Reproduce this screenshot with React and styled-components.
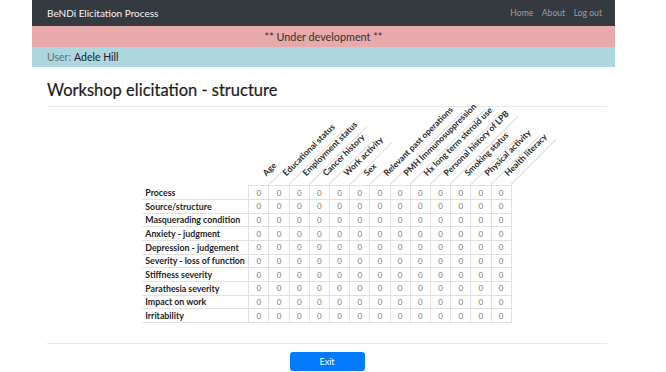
import React from 'react';
import styled, { createGlobalStyle } from 'styled-components';

const GlobalStyle = createGlobalStyle`
  body {
    margin: 0;
    background: #fff;
    font-family: Lato, "Open Sans", sans-serif;
    color: #212529;
  }
`;

const columns = [
  'Age',
  'Educational status',
  'Employment status',
  'Cancer history',
  'Work activity',
  'Sex',
  'Relevant past operations',
  'PMH Immunosuppression',
  'Hx long term steroid use',
  'Personal history of LPB',
  'Smoking status',
  'Physical activity',
  'Health literacy'
];

const rows = [
  'Process',
  'Source/structure',
  'Masquerading condition',
  'Anxiety - judgment',
  'Depression - judgement',
  'Severity - loss of function',
  'Stiffness severity',
  'Parathesia severity',
  'Impact on work',
  'Irritability'
];

const COL_W = 20.2;

const Page = styled.div`
  width: 583px;
  margin-left: 32px;
`;

const Navbar = styled.nav`
  height: 26px;
  background: #343a40;
  display: flex;
  align-items: center;
  justify-content: space-between;
  padding: 0 13px 0 15px;
`;

const Brand = styled.span`
  font-size: 10px;
  color: #f4f4f4;
`;

const NavLinks = styled.div`
  display: flex;
  gap: 8.5px;
`;

const NavLink = styled.a`
  font-size: 8.6px;
  color: #9c9fa3;
  text-decoration: none;
`;

const DevBanner = styled.div`
  height: 21px;
  background: #e7a9a9;
  display: flex;
  align-items: center;
  justify-content: center;
  font-size: 10.8px;
  color: #333;
`;

const UserBar = styled.div`
  height: 20px;
  background: #add6e0;
  display: flex;
  align-items: center;
  padding: 0 15px;
  font-size: 10.5px;
  font-weight: 400;
  color: #222;
`;

const UserLabel = styled.span`
  color: #6a6a6a;
  margin-right: 3px;
`;

const Content = styled.main`
  padding: 0 8px 0 15px;
`;

const Title = styled.h3`
  margin: 12.5px 0 0;
  font-size: 16.5px;
  line-height: 20.4px;
  font-weight: 400;
  color: #1c1c1c;
  -webkit-text-stroke: 0.2px #1c1c1c;
`;

const Rule = styled.hr`
  margin: ${p => p.$top}px 0 0;
  border: 0;
  border-top: 1px solid #e8e8e8;
`;

const Grid = styled.table`
  margin: 0 auto;
  border-collapse: collapse;
  table-layout: fixed;
  width: ${106.5 + COL_W * columns.length}px;
`;

const HeadCell = styled.th`
  height: 78px;
  padding: 0;
  vertical-align: bottom;
  white-space: nowrap;
  width: ${p => p.$w}px;
`;

const Rotated = styled.div`
  display: flex;
  width: ${COL_W}px;
  transform-origin: bottom left;
  transform: translateX(${COL_W}px) rotate(-45deg);
`;

const HeadText = styled.span`
  flex-shrink: 0;
  display: inline-block;
  padding: 0 5px 5px 4px;
  border-bottom: 1px solid #dcdcdc;
  font-size: 8.5px;
  line-height: 10px;
  font-weight: 700;
  color: #2a2a2a;
`;

const Row = styled.tr`
  height: 13.67px;
`;

const LabelCell = styled.td`
  padding: 0 0 0 3px;
  border-bottom: 1px solid #e2e2e2;
  font-size: 8.8px;
  font-weight: 700;
  color: #1e1e1e;
  white-space: nowrap;
  text-align: left;
`;

const ValueCell = styled.td`
  padding: 0;
  border: 1px solid #e0e0e0;
  font-size: 8px;
  color: #777;
  text-align: center;
`;

const ExitButton = styled.button`
  display: block;
  margin: 8.5px auto 0;
  width: 75px;
  height: 18.6px;
  padding: 0;
  border: 0;
  border-radius: 3px;
  background: #007bff;
  color: #fff;
  font-family: inherit;
  font-size: 9px;
`;

export default function App() {
  return (
    <Page>
      <GlobalStyle />
      <Navbar>
        <Brand>BeNDi Elicitation Process</Brand>
        <NavLinks>
          <NavLink href="#">Home</NavLink>
          <NavLink href="#">About</NavLink>
          <NavLink href="#">Log out</NavLink>
        </NavLinks>
      </Navbar>
      <DevBanner>** Under development **</DevBanner>
      <UserBar>
        <UserLabel>User:</UserLabel> Adele Hill
      </UserBar>
      <Content>
        <Title>Workshop elicitation - structure</Title>
        <Rule $top={6.4} />
        <Grid>
          <thead>
            <tr>
              <HeadCell $w={106.5} />
              {columns.map(c => (
                <HeadCell key={c} $w={COL_W}>
                  <Rotated>
                    <HeadText>{c}</HeadText>
                  </Rotated>
                </HeadCell>
              ))}
            </tr>
          </thead>
          <tbody>
            {rows.map(r => (
              <Row key={r}>
                <LabelCell>{r}</LabelCell>
                {columns.map(c => (
                  <ValueCell key={c}>0</ValueCell>
                ))}
              </Row>
            ))}
          </tbody>
        </Grid>
        <Rule $top={20} />
        <ExitButton>Exit</ExitButton>
      </Content>
    </Page>
  );
}
